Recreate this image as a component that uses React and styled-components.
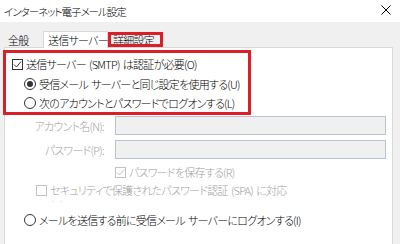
import React from "react";
import styled, { createGlobalStyle } from "styled-components";

const GlobalStyle = createGlobalStyle`
  html, body {
    margin: 0;
    padding: 0;
    background: #f0f0f0;
  }
  body {
    font-family: "Noto Sans CJK JP", "Noto Sans", sans-serif;
    font-size: 11px;
    font-weight: 300;
    letter-spacing: -0.75px;
    word-spacing: 1.5px;
    font-feature-settings: "palt";
    color: #000;
  }
`;

const Window = styled.div`
  width: 400px;
  height: 244px;
  overflow: hidden;
  display: flex;
  flex-direction: column;
  background: #f0f0f0;
`;

const TitleBar = styled.div`
  height: 22px;
  flex: none;
  background: #fff;
  display: flex;
  align-items: center;
  justify-content: space-between;
  padding: 0 9px 0 4px;
  font-size: 10.5px;
  letter-spacing: -1px;
`;

const CloseButton = styled.svg`
  width: 10px;
  height: 10px;
  margin-top: -3px;
`;

const Body = styled.div`
  flex: 1;
  display: flex;
  flex-direction: column;
  padding: 9px 7px 0 4px;
`;

const TabStrip = styled.div`
  height: 16px;
  display: flex;
  align-items: flex-end;
  position: relative;
  z-index: 1;
`;

const Tab = styled.div`
  box-sizing: border-box;
  height: ${(p) => (p.$active ? "17px" : "15px")};
  margin-bottom: ${(p) => (p.$active ? "-1px" : "0")};
  width: ${(p) => p.$width}px;
  display: flex;
  align-items: center;
  padding-left: ${(p) => p.$pad}px;
  padding-top: 1px;
  background: ${(p) => (p.$active ? "#fff" : "transparent")};
  border: 1px solid ${(p) => (p.$active ? "#d9d9d9" : "transparent")};
  border-bottom: none;
  outline: ${(p) => (p.$marked ? "3px solid #dc1e28" : "none")};
  outline-offset: -3px;
  line-height: 1;
  white-space: nowrap;
`;

const Panel = styled.div`
  flex: 1;
  background: #fff;
  border: 1px solid #d9d9d9;
  border-bottom: none;
  padding-top: 2px;
  display: flex;
  flex-direction: column;
`;

const Highlight = styled.div`
  margin-left: -2px;
  width: 248px;
  box-sizing: border-box;
  border: 3px solid #dc1e28;
  padding-top: 1px;
  display: flex;
  flex-direction: column;
`;

const OptionRow = styled.label`
  display: flex;
  align-items: center;
  gap: 3px;
  height: ${(p) => p.$height || 20}px;
  padding-left: ${(p) => p.$indent || 0}px;
  margin-top: ${(p) => p.$top || 0}px;
  color: ${(p) => (p.$disabled ? "#a0a0a0" : "#000")};
  white-space: nowrap;
`;

const Box = styled.span`
  box-sizing: border-box;
  width: 11px;
  height: 11px;
  flex: none;
  border: 1px solid ${(p) => (p.$disabled ? "#c2c2c2" : "#333")};
  background: #fff;
  display: flex;
  align-items: center;
  justify-content: center;
`;

const Radio = styled.span`
  box-sizing: border-box;
  width: 12px;
  height: 12px;
  flex: none;
  border-radius: 50%;
  border: 1px solid #333;
  display: flex;
  align-items: center;
  justify-content: center;
  &::after {
    content: "";
    width: 6px;
    height: 6px;
    border-radius: 50%;
    background: ${(p) => (p.$checked ? "#333" : "transparent")};
  }
`;

const FieldRow = styled.div`
  display: grid;
  grid-template-columns: 110px 1fr;
  align-items: center;
  height: 19px;
  margin-top: ${(p) => p.$top}px;
`;

const FieldLabel = styled.span`
  text-align: right;
  padding-right: 11px;
  color: #a0a0a0;
  white-space: nowrap;
`;

const Input = styled.div`
  height: 19px;
  box-sizing: border-box;
  margin-right: 6px;
  background: #f0f0f0;
  border: 1px solid #b7c2d2;
`;

const WrapRow = styled.label`
  display: flex;
  align-items: flex-start;
  gap: 3px;
  height: 20px;
  overflow: hidden;
  padding-left: 31px;
  color: #a0a0a0;
`;

const WrapBox = styled(Box)`
  margin-top: 3px;
`;

const WrapText = styled.span`
  line-height: 15px;
  margin-top: 1px;
`;

const Check = ({ color }) => (
  <svg width="9" height="9" viewBox="0 0 9 9">
    <path d="M1 4.5 L3.5 7 L8 1.5" fill="none" stroke={color} strokeWidth="1" />
  </svg>
);

export default function App() {
  return (
    <>
      <GlobalStyle />
      <Window>
        <TitleBar>
          <span>インターネット電子メール設定</span>
          <CloseButton viewBox="0 0 10 10">
            <path d="M0.5 0.5 L9.5 9.5 M9.5 0.5 L0.5 9.5" stroke="#000" strokeWidth="1" />
          </CloseButton>
        </TitleBar>
        <Body>
          <TabStrip>
            <Tab $width={39} $pad={3}>
              全般
            </Tab>
            <Tab $width={65} $pad={4} $active>
              送信サーバー
            </Tab>
            <Tab $width={55} $pad={4} $marked>
              詳細設定
            </Tab>
          </TabStrip>
          <Panel>
            <Highlight>
              <OptionRow $indent={6}>
                <Box>
                  <Check color="#333" />
                </Box>
                送信サーバー (SMTP) は認証が必要(O)
              </OptionRow>
              <OptionRow $indent={18} $height={19}>
                <Radio $checked />
                受信メール サーバーと同じ設定を使用する(U)
              </OptionRow>
              <OptionRow $indent={18} $height={19}>
                <Radio />
                次のアカウントとパスワードでログオンする(L)
              </OptionRow>
            </Highlight>
            <FieldRow $top={1}>
              <FieldLabel>アカウント名(N):</FieldLabel>
              <Input />
            </FieldRow>
            <FieldRow $top={5}>
              <FieldLabel>パスワード(P):</FieldLabel>
              <Input />
            </FieldRow>
            <OptionRow $indent={110} $top={3} $disabled>
              <Box $disabled>
                <Check color="#c2c2c2" />
              </Box>
              パスワードを保存する(R)
            </OptionRow>
            <WrapRow>
              <WrapBox $disabled />
              <WrapText>
                セキュリティで保護されたパスワード認証 (SPA) に対応
                <br />
                (Q)
              </WrapText>
            </WrapRow>
            <OptionRow $indent={19} $top={8}>
              <Radio />
              メールを送信する前に受信メール サーバーにログオンする(I)
            </OptionRow>
          </Panel>
        </Body>
      </Window>
    </>
  );
}
